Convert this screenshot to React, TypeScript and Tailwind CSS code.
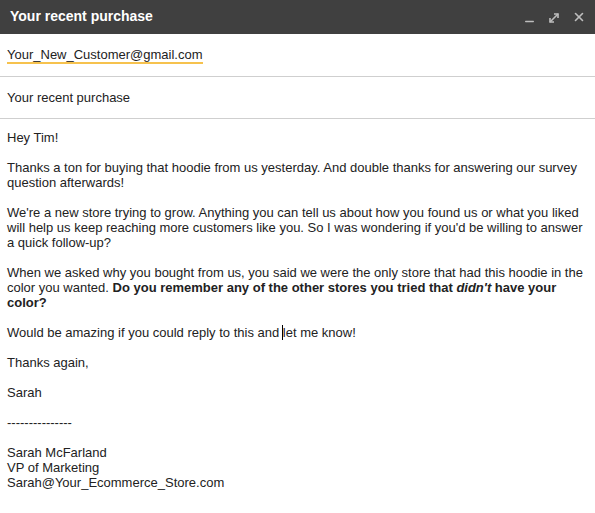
import { Minus, X } from "lucide-react";

export default function App() {
  return (
    <div
      className="w-[595px] h-[513px] bg-white text-[#222] overflow-hidden"
      style={{ fontFamily: '"Liberation Sans", Arial, sans-serif' }}
    >
      {/* Title bar */}
      <div className="h-[34px] bg-[#404040] flex items-center justify-between pl-[10px] pr-[9px]">
        <span className="text-white text-[14px] font-bold -mt-[1px]">Your recent purchase</span>
        <div className="flex items-center gap-[12px] text-[#bdbdbd]">
          <Minus className="w-[13px] h-[13px] mt-[8px]" strokeWidth={2.5} />
          <svg width="12" height="12" viewBox="0 0 12 12" className="mt-[1px]">
            <path d="M2 10 L10 2" stroke="#bdbdbd" strokeWidth="1.6" />
            <path d="M6 2 H10 V6" fill="none" stroke="#bdbdbd" strokeWidth="1.6" />
            <path d="M2 6 V10 H6" fill="none" stroke="#bdbdbd" strokeWidth="1.6" />
          </svg>
          <X className="w-[14px] h-[14px]" strokeWidth={2.8} />
        </div>
      </div>

      {/* To */}
      <div className="h-[43px] border-b border-[#cfcfcf] px-[7px] flex items-center text-[13px]">
        <span className="border-b-2 border-[#f6c24e] leading-[15px] mt-[1px]">
          Your_New_Customer@gmail.com
        </span>
      </div>

      {/* Subject */}
      <div className="h-[42px] border-b border-[#cfcfcf] px-[7px] flex items-center text-[13px]">
        Your recent purchase
      </div>

      {/* Body */}
      <div className="pl-[7px] pr-[12px] pt-[11px] text-[13px] leading-[15px] flex flex-col gap-[15px]">
        <p>Hey Tim!</p>
        <p>
          Thanks a ton for buying that hoodie from us yesterday. And double thanks for answering our survey
          question afterwards!
        </p>
        <p>
          We're a new store trying to grow. Anything you can tell us about how you found us or what you liked
          will help us keep reaching more customers like you. So I was wondering if you'd be willing to answer
          a quick follow-up?
        </p>
        <p>
          When we asked why you bought from us, you said we were the only store that had this hoodie in the
          color you wanted.{" "}
          <b>
            Do you remember any of the other stores you tried that <i>didn't</i> have your color?
          </b>
        </p>
        <p>
          Would be amazing if you could reply to this and{" "}
          <span className="border-l border-black -ml-[1px]">l</span>et me know!
        </p>
        <p>Thanks again,</p>
        <p>Sarah</p>
        <p>---------------</p>
        <p>
          Sarah McFarland
          <br />
          VP of Marketing
          <br />
          Sarah@Your_Ecommerce_Store.com
        </p>
      </div>
    </div>
  );
}
